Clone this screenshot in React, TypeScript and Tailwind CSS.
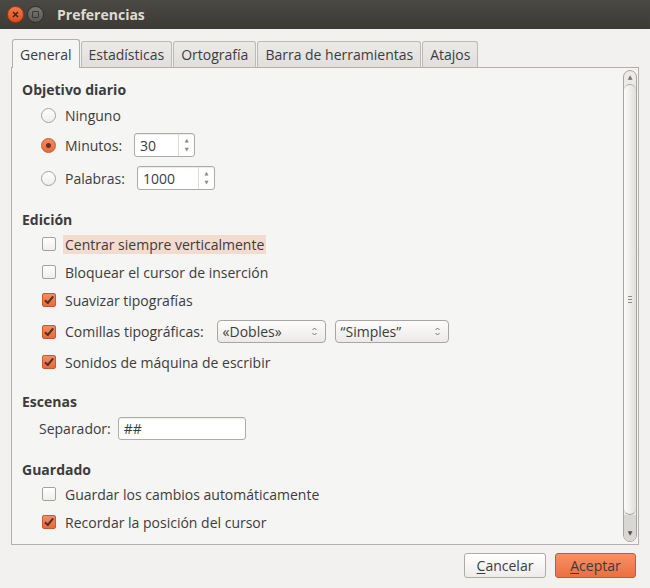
import React from 'react';

const FONT = '"Open Sans", "Noto Sans", "DejaVu Sans", sans-serif';

function Radio({ checked }: { checked?: boolean }) {
  return checked ? (
    <span className="w-[15px] h-[15px] rounded-full border border-[#c9582c] bg-gradient-to-b from-[#f58c5f] to-[#e96a3a] flex items-center justify-center shrink-0">
      <span className="w-[5px] h-[5px] rounded-full bg-[#5a3526]" />
    </span>
  ) : (
    <span className="w-[15px] h-[15px] rounded-full border border-[#a5a29c] bg-gradient-to-b from-[#ffffff] to-[#efeeec] shrink-0" />
  );
}

function Check({ checked }: { checked?: boolean }) {
  return checked ? (
    <span className="w-[14px] h-[14px] rounded-[2px] border border-[#c9582c] bg-gradient-to-b from-[#f58c5f] to-[#e96a3a] flex items-center justify-center shrink-0">
      <svg width="12" height="12" viewBox="0 0 12 12">
        <path d="M2 6.2 L4.8 9 L10.2 2.4" fill="none" stroke="#4e3329" strokeWidth="2" strokeLinejoin="round" />
      </svg>
    </span>
  ) : (
    <span className="w-[14px] h-[14px] rounded-[2px] border border-[#a5a29c] bg-gradient-to-b from-[#ffffff] to-[#efeeec] shrink-0" />
  );
}

function Spin({ value, w }: { value: string; w: string }) {
  return (
    <div className={`${w} h-[24px] flex rounded-[3px] border border-[#aeaaa4] bg-white shadow-[inset_0_1px_1px_rgba(0,0,0,0.08)]`}>
      <div className="flex-1 flex items-center pl-[5px]">{value}</div>
      <div className="w-[16px] border-l border-[#dedbd7] flex flex-col items-center justify-between py-[3px] text-[5px] leading-[7px] text-[#8a8782]">
        <span>▲</span>
        <span>▼</span>
      </div>
    </div>
  );
}

function Combo({ label, w }: { label: string; w: string }) {
  return (
    <div className={`${w} h-[23px] flex items-center justify-between pl-[5px] pr-[7px] rounded-[4px] border border-[#a9a6a1] bg-gradient-to-b from-[#fdfdfc] to-[#ebeae8]`}>
      <span>{label}</span>
      <svg width="7" height="11" viewBox="0 0 7 11">
        <path d="M1.5 4 L3.5 2 L5.5 4" fill="none" stroke="#77746f" strokeWidth="1" />
        <path d="M1.5 7 L3.5 9 L5.5 7" fill="none" stroke="#77746f" strokeWidth="1" />
      </svg>
    </div>
  );
}

export default function App() {
  const tabs = ['Estadísticas', 'Ortografía', 'Barra de herramientas', 'Atajos'];
  return (
    <div className="w-[650px] h-[588px] bg-[#f2f1f0] flex flex-col text-[14px] text-[#3c3c3c] overflow-hidden" style={{ fontFamily: FONT }}>
      {/* title bar */}
      <div className="h-[29px] bg-gradient-to-b from-[#4a4943] to-[#3b3a35] flex items-center pl-[7px] gap-[3px]">
        <span className="w-[17px] h-[17px] rounded-full bg-gradient-to-b from-[#f27a4a] to-[#df4b16] border border-[#9c3a14] flex items-center justify-center">
          <svg width="7" height="7" viewBox="0 0 7 7">
            <path d="M1 1 L6 6 M6 1 L1 6" stroke="#3a2219" strokeWidth="1.4" />
          </svg>
        </span>
        <span className="w-[17px] h-[17px] rounded-full bg-gradient-to-b from-[#7a7873] to-[#5a5853] border border-[#2f2e2b] flex items-center justify-center">
          <span className="w-[7px] h-[7px] border border-[#3a3935] rounded-[1px]" />
        </span>
        <span className="ml-[10px] font-bold text-[#dfdbd2] text-[14px]">Preferencias</span>
      </div>

      <div className="flex-1 flex flex-col px-[11px] pt-[10px]">
        {/* tabs */}
        <div className="flex items-end h-[28px] pl-[1px]">
          <div className="relative z-10 -mb-px h-[29px] px-[7px] flex items-center bg-[#f5f5f4] border border-b-0 border-[#b3b0ab] rounded-t-[3px]">
            General
          </div>
          {tabs.map((t) => (
            <div key={t} className="h-[26px] ml-px px-[7px] flex items-center bg-gradient-to-b from-[#ebeae8] to-[#e1dfdc] border border-b-0 border-[#bdbab5] rounded-t-[3px]">
              {t}
            </div>
          ))}
        </div>

        {/* panel */}
        <div className="h-[478px] border border-[#b3b0ab] bg-[#f5f5f4] flex">
          <div className="flex-1 flex flex-col pl-[10px]">
            <div className="mt-[11px] h-[20px] flex items-center font-bold">Objetivo diario</div>
            <div className="mt-[6px] h-[20px] flex items-center pl-[19px] gap-[9px]">
              <Radio />
              <span>Ninguno</span>
            </div>
            <div className="mt-[8px] h-[24px] flex items-center pl-[19px] gap-[9px]">
              <Radio checked />
              <span>Minutos:</span>
              <Spin value="30" w="w-[61px] ml-[3px]" />
            </div>
            <div className="mt-[9px] h-[24px] flex items-center pl-[19px] gap-[9px]">
              <Radio />
              <span>Palabras:</span>
              <Spin value="1000" w="w-[78px] ml-[3px]" />
            </div>

            <div className="mt-[19px] h-[20px] flex items-center font-bold">Edición</div>
            <div className="mt-[5px] h-[20px] flex items-center pl-[20px] gap-[7px]">
              <Check />
              <span className="bg-[#f4dbd0] px-[2px] h-[19px] flex items-center">Centrar siempre verticalmente</span>
            </div>
            <div className="mt-[8px] h-[20px] flex items-center pl-[20px] gap-[9px]">
              <Check />
              <span>Bloquear el cursor de inserción</span>
            </div>
            <div className="mt-[8px] h-[20px] flex items-center pl-[20px] gap-[9px]">
              <Check checked />
              <span>Suavizar tipografías</span>
            </div>
            <div className="mt-[10px] h-[23px] flex items-center pl-[20px] gap-[9px]">
              <Check checked />
              <span>Comillas tipográficas:</span>
              <Combo label="«Dobles»" w="w-[109px] ml-[4px]" />
              <Combo label="“Simples”" w="w-[114px]" />
            </div>
            <div className="mt-[9px] h-[20px] flex items-center pl-[20px] gap-[9px]">
              <Check checked />
              <span>Sonidos de máquina de escribir</span>
            </div>

            <div className="mt-[19px] h-[20px] flex items-center font-bold">Escenas</div>
            <div className="mt-[6px] h-[23px] flex items-center pl-[17px] gap-[7px]">
              <span>Separador:</span>
              <div className="w-[128px] h-[23px] flex items-center pl-[5px] bg-white border border-[#aeaaa4] rounded-[3px] shadow-[inset_0_1px_1px_rgba(0,0,0,0.08)]">
                ##
              </div>
            </div>

            <div className="mt-[19px] h-[20px] flex items-center font-bold">Guardado</div>
            <div className="mt-[5px] h-[20px] flex items-center pl-[20px] gap-[9px]">
              <Check />
              <span>Guardar los cambios automáticamente</span>
            </div>
            <div className="mt-[8px] h-[20px] flex items-center pl-[20px] gap-[9px]">
              <Check checked />
              <span>Recordar la posición del cursor</span>
            </div>
          </div>

          {/* scrollbar */}
          <div className="w-[14px] mr-[1px] my-[2px] rounded-[7px] border border-[#a8a5a0] bg-[#ecebe9] flex flex-col overflow-hidden">
            <div className="h-[13px] flex items-center justify-center text-[6px] text-[#77746f]">▲</div>
            <div className="flex-1 rounded-[6px] border-y border-[#a8a5a0] bg-gradient-to-r from-[#fbfbfa] to-[#e2e0dd] flex items-center justify-center">
              <div className="flex flex-col gap-[2px]">
                <span className="w-[4px] h-px bg-[#8f8c87]" />
                <span className="w-[4px] h-px bg-[#8f8c87]" />
                <span className="w-[4px] h-px bg-[#8f8c87]" />
              </div>
            </div>
            <div className="h-[26px] bg-[#d9d7d3] flex items-end justify-center pb-[3px] text-[6px] text-[#55524e]">▼</div>
          </div>
        </div>

        {/* buttons */}
        <div className="mt-[8px] flex justify-end gap-[9px] pr-[3px]">
          <button className="w-[82px] h-[25px] rounded-[3px] border border-[#aeaaa4] bg-gradient-to-b from-[#ffffff] to-[#edecea] text-[#3c3c3c]">
            <span className="underline underline-offset-2">C</span>ancelar
          </button>
          <button className="w-[81px] h-[25px] rounded-[3px] border border-[#c6592f] bg-gradient-to-b from-[#f79066] to-[#ec6f41] text-[#3c3c3c]">
            <span className="underline underline-offset-2">A</span>ceptar
          </button>
        </div>
      </div>
    </div>
  );
}
